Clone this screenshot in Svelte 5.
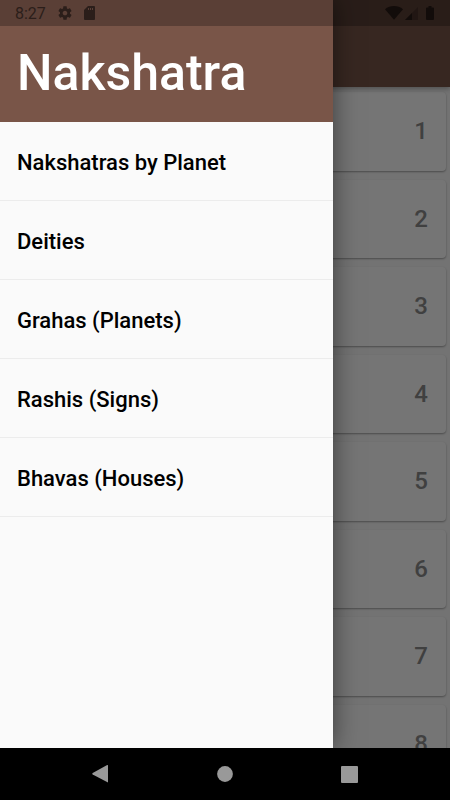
<script>
  const entries = [
    'Nakshatras by Planet',
    'Deities',
    'Grahas (Planets)',
    'Rashis (Signs)',
    'Bhavas (Houses)',
  ];
  const cards = [1, 2, 3, 4, 5, 6, 7, 8];
</script>

<div class="device">
  <div class="app">
    <main class="page">
      <div class="toolbar"></div>
      <ul class="cards">
        {#each cards as number}
          <li class="card">{number}</li>
        {/each}
      </ul>
    </main>

    <div class="scrim"></div>

    <aside class="drawer">
      <h1>Nakshatra</h1>
      <nav class="menu">
        {#each entries as entry}
          <a href="#top">{entry}</a>
        {/each}
      </nav>
    </aside>

    <header class="status">
      <span class="time">8:27</span>
      <svg class="gear" width="16" height="16" viewBox="0 0 24 24" aria-hidden="true">
        <path d="M19.43 12.98c.04-.32.07-.64.07-.98s-.03-.66-.07-.98l2.11-1.65c.19-.15.24-.42.12-.64l-2-3.46c-.12-.22-.39-.3-.61-.22l-2.49 1c-.52-.4-1.08-.73-1.69-.98l-.38-2.65C14.46 2.18 14.25 2 14 2h-4c-.25 0-.46.18-.49.42l-.38 2.65c-.61.25-1.17.59-1.69.98l-2.49-1c-.23-.09-.49 0-.61.22l-2 3.46c-.13.22-.07.49.12.64l2.11 1.65c-.04.32-.07.65-.07.98s.03.66.07.98l-2.11 1.65c-.19.15-.24.42-.12.64l2 3.46c.12.22.39.3.61.22l2.49-1c.52.4 1.08.73 1.69.98l.38 2.65c.03.24.24.42.49.42h4c.25 0 .46-.18.49-.42l.38-2.65c.61-.25 1.17-.59 1.69-.98l2.49 1c.23.09.49 0 .61-.22l2-3.46c.12-.22.07-.49-.12-.64l-2.11-1.65zM12 15.5c-1.93 0-3.5-1.57-3.5-3.5s1.57-3.5 3.5-3.5 3.5 1.57 3.5 3.5-1.57 3.5-3.5 3.5z" />
      </svg>
      <svg class="sd" width="11" height="14" viewBox="0 0 11 14" aria-hidden="true">
        <path d="M4 0h6a1 1 0 0 1 1 1v12a1 1 0 0 1-1 1H1a1 1 0 0 1-1-1V4z" />
        <path class="pins" d="M4 2h1v2H4zM6 2h1v2H6zM8 2h1v2H8z" />
      </svg>
      <span class="spacer"></span>
      <svg class="wifi" width="18" height="14" viewBox="0 0 18 14" aria-hidden="true">
        <path d="M0 3.2C2.6 1.1 5.7 0 9 0s6.4 1.100 9 3.200L9 13.800z" />
      </svg>
      <svg class="signal" width="13" height="13" viewBox="0 0 13 13" aria-hidden="true">
        <path class="faint" d="M13 0v13H0z" />
        <path d="M7 6v7H0z" />
      </svg>
      <svg class="battery" width="8" height="14" viewBox="0 0 8 14" aria-hidden="true">
        <path d="M2.500 0h3v1.500H7a1 1 0 0 1 1 1V13a1 1 0 0 1-1 1H1a1 1 0 0 1-1-1V2.500a1 1 0 0 1 1-1h1.500z" />
      </svg>
    </header>
  </div>

  <footer class="navbar">
    <button aria-label="Back">
      <svg width="18" height="20" viewBox="0 0 18 20"><path d="M16 1.200v17.200L.7 10.500a1 1 0 0 1 0-1.500L15.200 1z" /></svg>
    </button>
    <button aria-label="Home">
      <svg width="16" height="16" viewBox="0 0 16 16"><circle cx="8" cy="8" r="7.900" /></svg>
    </button>
    <button aria-label="Recent apps">
      <svg width="17" height="17" viewBox="0 0 17 17"><rect width="17" height="17" rx="1" /></svg>
    </button>
  </footer>
</div>

<style>
  .device {
    display: flex;
    flex-direction: column;
    height: 100vh;
    font-family: Roboto, "Liberation Sans", sans-serif;
    font-weight: 500;
    background: #000;
  }

  .app {
    position: relative;
    flex: 1;
    min-height: 0;
    overflow: hidden;
    background: #fafafa;
  }

  .page {
    height: 100%;
    overflow: hidden;
  }

  .toolbar {
    position: relative;
    height: 87px;
    background: #795548;
    box-shadow: 0 2px 5px rgba(0, 0, 0, 0.3);
  }

  .cards {
    display: grid;
    grid-template-rows: repeat(8, 1fr);
    gap: 9px;
    height: 691px;
    margin: 0;
    padding: 5px 4px 0;
    list-style: none;
  }

  .card {
    display: flex;
    align-items: center;
    justify-content: flex-end;
    padding: 0 18px;
    border-radius: 4px;
    background: #fff;
    box-shadow: 0 1px 2px rgba(0, 0, 0, 0.35);
    color: #8c8c8c;
    font-size: 24px;
  }

  .scrim {
    position: absolute;
    inset: 0;
    background: rgba(0, 0, 0, 0.54);
  }

  .drawer {
    position: absolute;
    inset: 0 auto 0 0;
    width: 74%;
    background: #fafafa;
    box-shadow: 0 0 24px rgba(0, 0, 0, 0.5);
  }

  h1 {
    box-sizing: border-box;
    height: 122px;
    margin: 0;
    padding: 43px 17px 0;
    background: #795548;
    color: #fff;
    font-size: 50px;
    font-weight: 500;
    line-height: 60px;
  }

  .menu {
    display: grid;
    grid-template-rows: repeat(5, 1fr);
    height: 395px;
  }

  .menu a {
    display: flex;
    align-items: center;
    padding: 2px 17px 0;
    border-bottom: 1px solid #ececec;
    color: #000;
    font-size: 22px;
    text-decoration: none;
  }

  .status {
    position: absolute;
    inset: 0 0 auto;
    display: flex;
    align-items: center;
    box-sizing: border-box;
    height: 26px;
    padding: 0 16px 0 15px;
    background: rgba(0, 0, 0, 0.25);
    color: #2b1e1a;
    font-size: 16px;
  }

  svg {
    display: block;
    fill: currentColor;
  }

  .time {
    padding-top: 1px;
    font-weight: 400;
  }

  .gear {
    margin-left: 11px;
  }

  .sd {
    margin-left: 11px;
  }

  .pins {
    fill: #5a4037;
  }

  .spacer {
    flex: 1;
  }

  .wifi,
  .signal,
  .battery {
    color: #120c0a;
  }

  .signal {
    margin-left: 2px;
  }

  .battery {
    margin-left: 8px;
  }

  .faint {
    fill: #211613;
  }

  .navbar {
    display: flex;
    align-items: center;
    justify-content: center;
    gap: 76px;
    height: 52px;
    background: #000;
  }

  .navbar button {
    display: flex;
    align-items: center;
    justify-content: center;
    width: 48px;
    height: 48px;
    padding: 0;
    border: 0;
    background: none;
    color: #999;
  }
</style>
